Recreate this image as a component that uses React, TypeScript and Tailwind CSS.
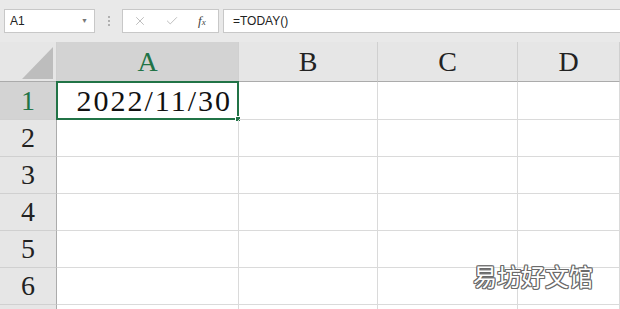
import { X, Check } from "lucide-react";

const cols = ["A", "B", "C", "D"];
const rows = [1, 2, 3, 4, 5, 6, 7];

const serif = "font-['Liberation_Serif',serif]";

export default function App() {
  return (
    <div className="relative w-[620px] h-[309px] overflow-hidden bg-white font-['Liberation_Sans','Noto_Sans_CJK_SC',sans-serif]">
      {/* formula bar */}
      <div className="flex h-[42px] items-start bg-[#e9e9e9] pt-[9px] pl-[4px]">
        <div className="flex h-[24px] w-[91px] items-center justify-between border border-[#c8c8c8] bg-white pl-[5px] pr-[6px] text-[12px] text-[#222]">
          <span>A1</span>
          <span className="text-[7px] text-[#777]">▼</span>
        </div>
        <div className="flex h-[24px] w-[27px] flex-col items-center justify-center gap-[2px]">
          <span className="h-[2px] w-[2px] bg-[#b0b0b0]" />
          <span className="h-[2px] w-[2px] bg-[#b0b0b0]" />
          <span className="h-[2px] w-[2px] bg-[#b0b0b0]" />
        </div>
        <div className="flex h-[24px] w-[97px] items-center border border-[#c8c8c8] bg-white pl-[10px]">
          <X className="h-[14px] w-[14px] text-[#b5b5b5]" strokeWidth={1.5} />
          <Check className="ml-[18px] h-[14px] w-[14px] text-[#b5b5b5]" strokeWidth={1.5} />
          <span className={`ml-[19px] ${serif} text-[13px] italic text-[#444]`}>
            f<span className="text-[9px]">x</span>
          </span>
        </div>
        <div className="ml-[4px] flex h-[24px] flex-1 items-center border-y border-l border-[#c8c8c8] bg-white pl-[9px] text-[12px] text-[#222]">
          =TODAY()
        </div>
      </div>

      {/* sheet grid */}
      <div className="grid grid-cols-[57px_182px_139px_140px_1fr] grid-rows-[40px_38px_repeat(6,37px)]">
        <div className="relative border-r border-b border-r-[#d0d0d0] border-b-[#ababab] bg-[#e6e6e6]">
          <svg className="absolute left-0 top-0" width="57" height="40">
            <polygon points="22,37 53,5 53,37" fill="#bdbdbd" />
          </svg>
        </div>
        {cols.map((c) => (
          <div
            key={c}
            className={`flex items-center justify-center border-b border-r border-b-[#ababab] border-r-[#d0d0d0] ${serif} text-[28px] leading-none ${
              c === "A" ? "bg-[#d3d3d3] text-[#217346]" : "bg-[#e6e6e6] text-[#222]"
            }`}
          >
            {c}
          </div>
        ))}

        {rows.map((r) => (
          <div key={r} className="contents">
            <div
              className={`flex items-center justify-center border-b border-r border-b-[#d0d0d0] border-r-[#ababab] ${serif} text-[28px] leading-none ${
                r === 1 ? "bg-[#d3d3d3] text-[#217346]" : "bg-[#e6e6e6] text-[#222]"
              }`}
            >
              {r < 7 ? r : ""}
            </div>
            {cols.map((c) => (
              <div key={c} className="relative border-b border-r border-[#dadada]">
                {r === 1 && c === "A" && (
                  <div className="absolute left-[-1px] top-[-1px] right-[-1px] bottom-[-1px] flex items-center justify-end border-2 border-[#217346] pr-[5px]">
                    <span className={`${serif} text-[30px] leading-none tracking-[2px] text-[#111]`}>2022/11/30</span>
                    <span className="absolute right-[-4px] bottom-[-4px] h-[6px] w-[6px] border border-white bg-[#217346]" />
                  </div>
                )}
              </div>
            ))}
          </div>
        ))}
      </div>

      {/* watermark */}
      <div className="absolute left-[473px] top-[264px] text-[24px] leading-none text-white font-['Noto_Sans_CJK_SC',sans-serif] [text-shadow:1px_0_0_#6a6a6a,-1px_0_0_#6a6a6a,0_1px_0_#6a6a6a,0_-1px_0_#6a6a6a,1px_1px_0_#6a6a6a,-1px_-1px_0_#6a6a6a,1px_-1px_0_#6a6a6a,-1px_1px_0_#6a6a6a]">
        易坊好文馆
      </div>
    </div>
  );
}
